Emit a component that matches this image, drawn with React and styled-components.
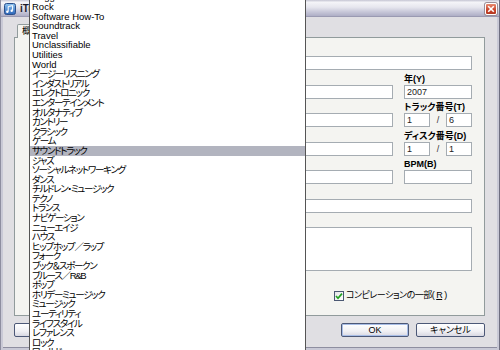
import React from "react";
import styled, { createGlobalStyle } from "styled-components";

const GlobalStyle = createGlobalStyle`
  html, body {
    margin: 0;
    padding: 0;
    background: #ffffff;
  }
  body {
    font-family: "Liberation Sans", "Noto Sans CJK JP", sans-serif;
    font-feature-settings: "palt";
    color: #000;
  }
`;

const genres = [
  "Reggae",
  "Rock",
  "Software How-To",
  "Soundtrack",
  "Travel",
  "Unclassifiable",
  "Utilities",
  "World",
  "イージーリスニング",
  "インダストリアル",
  "エレクトロニック",
  "エンターテインメント",
  "オルタナティブ",
  "カントリー",
  "クラシック",
  "ゲーム",
  "サウンドトラック",
  "ジャズ",
  "ソーシャルネットワーキング",
  "ダンス",
  "チルドレン・ミュージック",
  "テクノ",
  "トランス",
  "ナビゲーション",
  "ニューエイジ",
  "ハウス",
  "ヒップホップ／ラップ",
  "フォーク",
  "ブック＆スポークン",
  "ブルース／R&B",
  "ポップ",
  "ホリデーミュージック",
  "ミュージック",
  "ユーティリティ",
  "ライフスタイル",
  "レファレンス",
  "ロック",
  "ワールド",
];

// latin names keep normal spacing, the katakana ones are drawn narrower
const isLatin = (s) => /^[\x20-\x7e]+$/.test(s);

const App = () => {
  return (
    <Screen>
      <GlobalStyle />
      <Window>
        <TitleBar>
          <AppIcon width="12" height="12" viewBox="0 0 12 12">
            <defs>
              <linearGradient id="ic" x1="0" y1="0" x2="0" y2="1">
                <stop offset="0" stopColor="#8ec4f2" />
                <stop offset="1" stopColor="#2a64b8" />
              </linearGradient>
            </defs>
            <rect x="0.5" y="0.5" width="11" height="11" rx="2" fill="url(#ic)" stroke="#2b4f8a" />
            <path d="M4.2 8.6V3.6l4.4-1v5" stroke="#fff" strokeWidth="1" fill="none" />
            <circle cx="3.3" cy="8.7" r="1.2" fill="#fff" />
            <circle cx="7.7" cy="7.7" r="1.2" fill="#fff" />
          </AppIcon>
          <Title>iTunes</Title>
          <CloseButton>
            <svg width="8" height="8" viewBox="0 0 8 8">
              <path d="M1.2 1.2l5.6 5.6M6.8 1.2L1.2 6.8" stroke="#fff" strokeWidth="1.6" />
            </svg>
          </CloseButton>
        </TitleBar>
        <Body>
          <TabRow>
            <Tab>概要</Tab>
            <Tab $inactive>情報</Tab>
          </TabRow>
          <Panel>
            <Row>
              <Cell>
                <Label>名前(N)</Label>
                <TextBox />
              </Cell>
            </Row>
            <Row $split>
              <Cell>
                <Label>アーティスト(A)</Label>
                <TextBox />
              </Cell>
              <Cell>
                <Label>年(Y)</Label>
                <TextBox>2007</TextBox>
              </Cell>
            </Row>
            <Row $split>
              <Cell>
                <Label>アルバムアーティスト(T)</Label>
                <TextBox />
              </Cell>
              <Cell>
                <Label>トラック番号(T)</Label>
                <Pair>
                  <TextBox $w={26}>1</TextBox>
                  <Slash>/</Slash>
                  <TextBox $w={26}>6</TextBox>
                </Pair>
              </Cell>
            </Row>
            <Row $split>
              <Cell>
                <Label>アルバム(L)</Label>
                <TextBox />
              </Cell>
              <Cell>
                <Label>ディスク番号(D)</Label>
                <Pair>
                  <TextBox $w={26}>1</TextBox>
                  <Slash>/</Slash>
                  <TextBox $w={26}>1</TextBox>
                </Pair>
              </Cell>
            </Row>
            <Row $split>
              <Cell>
                <Label>グループ(G)</Label>
                <TextBox />
              </Cell>
              <Cell>
                <Label>BPM(B)</Label>
                <TextBox />
              </Cell>
            </Row>
            <Row>
              <Cell>
                <Label>作曲者(C)</Label>
                <TextBox />
              </Cell>
            </Row>
            <Row>
              <Cell>
                <Label>コメント(M)</Label>
                <TextBox $h={44} />
              </Cell>
            </Row>
            <GenreRow>
              <Cell>
                <Label>ジャンル(E)</Label>
                <TextBox $w={268} $h={15}>サウンドトラック</TextBox>
              </Cell>
              <CheckLabel>
                <CheckBox>
                  <svg width="8" height="8" viewBox="0 0 8 8">
                    <path d="M1 4l2 2.2L7 1.6" stroke="#21a121" strokeWidth="1.7" fill="none" />
                  </svg>
                </CheckBox>
                コンピレーションの一部(<u>R</u>)
              </CheckLabel>
            </GenreRow>
          </Panel>
          <ButtonRow>
            <ButtonGroup>
              <Button>前へ(P)</Button>
              <Button>次へ(N)</Button>
            </ButtonGroup>
            <ButtonGroup>
              <Button $default>OK</Button>
              <Button $w={69}>キャンセル</Button>
            </ButtonGroup>
          </ButtonRow>
        </Body>
      </Window>
      <ListBox>
        {genres.map((g) => (
          <ListItem key={g} $selected={g === "サウンドトラック"} $narrow={!isLatin(g)}>
            {g}
          </ListItem>
        ))}
      </ListBox>
    </Screen>
  );
};

const Screen = styled.div`
  position: relative;
  width: 500px;
  height: 350px;
  overflow: hidden;
`;

const Window = styled.div`
  display: flex;
  flex-direction: column;
  height: 350px;
  box-sizing: border-box;
  background: #c9c9d6;
  border-left: 1px solid #8e8ea0;
  border-right: 1px solid #6e6e80;
`;

const TitleBar = styled.div`
  display: flex;
  align-items: flex-end;
  height: 17px;
  box-sizing: border-box;
  padding: 0 2px 1px 3px;
  border-bottom: 1px solid #9a9ab2;
  background: linear-gradient(
    to bottom,
    #c4c4d2 0,
    #f4f4f8 14%,
    #e6e6ee 45%,
    #c6c6d8 75%,
    #aeaec6 100%
  );
`;

const AppIcon = styled.svg`
  display: block;
`;

const Title = styled.div`
  flex: 1;
  margin-left: 4px;
  font-size: 10px;
  font-weight: bold;
  line-height: 13px;
  color: #1c1c2a;
`;

const CloseButton = styled.div`
  display: flex;
  align-items: center;
  justify-content: center;
  width: 12px;
  height: 12px;
  box-sizing: border-box;
  border: 1px solid #ffffff;
  border-radius: 2px;
  background: linear-gradient(to bottom, #e88a70, #c9432a 60%, #b33720);
  box-shadow: 0 0 0 1px #9a8e98;
`;

const Body = styled.div`
  flex: 1;
  display: flex;
  flex-direction: column;
  margin: 0 2px 2px 2px;
  padding: 7px 12px 8px 11px;
  background: #e0dfe3;
  border-bottom: 1px solid #8e8ea0;
`;

const TabRow = styled.div`
  display: flex;
  height: 13px;
  padding-left: 3px;
  position: relative;
  z-index: 1;
`;

const Tab = styled.div`
  height: ${(p) => (p.$inactive ? "12px" : "14px")};
  margin-top: ${(p) => (p.$inactive ? "1px" : "0")};
  box-sizing: border-box;
  padding: 0 6px 0 4px;
  border: 1px solid #919b9c;
  border-bottom: none;
  border-radius: 2px 2px 0 0;
  background: ${(p) => (p.$inactive ? "#ebebee" : "#f4f4f1")};
  font-size: 9px;
  line-height: 12px;
`;

const Panel = styled.div`
  display: flex;
  flex-direction: column;
  gap: 4.5px;
  height: 279px;
  box-sizing: border-box;
  padding: 8px 12px 0 16px;
  border: 1px solid #919b9c;
  background: #f4f4f1;
`;

const Row = styled.div`
  display: grid;
  grid-template-columns: ${(p) => (p.$split ? "1fr 68px" : "1fr")};
  column-gap: 11px;
`;

const Cell = styled.div`
  display: flex;
  flex-direction: column;
`;

const Label = styled.div`
  height: 10px;
  font-size: 9px;
  font-weight: bold;
  line-height: 9px;
  white-space: nowrap;
`;

const TextBox = styled.div`
  width: ${(p) => (p.$w ? `${p.$w}px` : "auto")};
  height: ${(p) => (p.$h ? `${p.$h}px` : "14px")};
  box-sizing: border-box;
  padding: 0 2px;
  border: 1px solid #a5acb2;
  background: #ffffff;
  font-size: 9px;
  line-height: 12px;
  color: #222;
`;

const Pair = styled.div`
  display: flex;
  align-items: center;
`;

const Slash = styled.div`
  width: 16px;
  text-align: center;
  font-size: 9px;
  line-height: 12px;
  color: #333;
`;

const GenreRow = styled.div`
  display: flex;
  align-items: flex-end;
  gap: 35px;
`;

const CheckLabel = styled.div`
  display: flex;
  align-items: center;
  gap: 2px;
  height: 10px;
  font-size: 9px;
  line-height: 11px;
  letter-spacing: -0.5px;
  white-space: nowrap;

  u {
    text-underline-offset: 1px;
  }
`;

const CheckBox = styled.div`
  display: flex;
  align-items: center;
  justify-content: center;
  width: 10px;
  height: 10px;
  box-sizing: border-box;
  border: 1px solid #4b5873;
  background: linear-gradient(135deg, #e6e6ea, #ffffff);
`;

const ButtonRow = styled.div`
  display: flex;
  justify-content: space-between;
  margin-top: 7px;
`;

const ButtonGroup = styled.div`
  display: flex;
  gap: 7px;
`;

const Button = styled.div`
  width: ${(p) => (p.$w ? `${p.$w}px` : "68px")};
  height: 14px;
  box-sizing: border-box;
  border: 1px solid #4c5877;
  border-radius: 2px;
  background: linear-gradient(to bottom, #ffffff, #f0f0f4 60%, #d8d8e2);
  box-shadow: ${(p) => (p.$default ? "inset 0 0 0 1px #a8bde6" : "none")};
  font-size: 9px;
  line-height: 12px;
  text-align: center;
`;

const ListBox = styled.div`
  position: absolute;
  left: 29px;
  top: -8.6px;
  width: 277px;
  height: 370px;
  box-sizing: border-box;
  border: 1px solid #555555;
  background: #ffffff;
  overflow: hidden;
  z-index: 5;
`;

const ListItem = styled.div`
  height: 9.6px;
  padding-left: 2px;
  font-size: 9.5px;
  line-height: 9.6px;
  letter-spacing: ${(p) => (p.$narrow ? "-1.3px" : "0")};
  white-space: nowrap;
  background: ${(p) => (p.$selected ? "#b2b4bf" : "transparent")};
`;

export default App;
